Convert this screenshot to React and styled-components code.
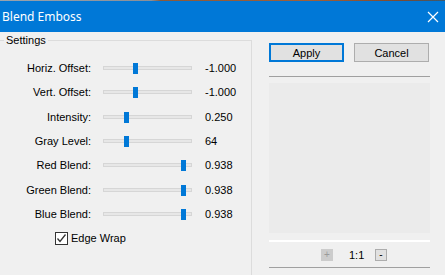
import React from 'react';
import styled, { createGlobalStyle } from 'styled-components';

const GlobalStyle = createGlobalStyle`
  html, body {
    margin: 0;
    padding: 0;
    width: 445px;
    height: 275px;
    overflow: hidden;
    background: #f0f0f0;
  }
`;

const Window = styled.div`
  display: flex;
  flex-direction: column;
  width: 445px;
  height: 275px;
  background: #f0f0f0;
  font-family: 'Liberation Sans', Arial, sans-serif;
  font-size: 11px;
  color: #000;
`;

const Desktop = styled.div`
  height: 1px;
  background: linear-gradient(90deg, #9aa3ad 0%, #8c8f96 34%, #8a5a3c 36%, #a0603a 70%, #7c4a30 90%, #3a5a70 100%);
`;

const TitleBar = styled.div`
  height: 31px;
  display: flex;
  align-items: center;
  justify-content: space-between;
  background: #0078d7;
  color: #fff;
  padding: 0 6px 0 2px;
  font-family: 'Noto Sans', 'Open Sans', sans-serif;
  font-size: 12px;
`;

const Body = styled.div`
  flex: 1;
  display: flex;
  min-height: 0;
`;

const GroupBox = styled.fieldset`
  box-sizing: border-box;
  width: 253px;
  margin: 2px 0 -10px -1px;
  padding: 3px 0 0 0;
  border: 1px solid #dcdcdc;
  legend {
    margin-left: 4px;
    padding: 0 2px;
    font-size: 11px;
  }
`;

const Rows = styled.div`
  display: grid;
  grid-template-columns: 91px 89px auto;
  grid-auto-rows: 24.33px;
  column-gap: 12px;
  align-items: center;
  margin-top: 7px;
`;

const Label = styled.div`
  text-align: right;
`;

const Track = styled.div`
  position: relative;
  height: 4px;
  background: #e7e7e7;
  border: 1px solid #d6d6d6;
  box-sizing: border-box;
`;

const Thumb = styled.div`
  position: absolute;
  top: -4px;
  width: 5px;
  height: 11px;
  background: #0078d7;
`;

const Value = styled.div`
  padding-left: 1px;
`;

const CheckRow = styled.label`
  grid-column: 1 / 4;
  display: flex;
  align-items: center;
  gap: 3px;
  padding-left: 55px;
`;

const Box = styled.span`
  box-sizing: border-box;
  width: 13px;
  height: 13px;
  border: 1px solid #333;
  background: #fff;
  display: flex;
  align-items: center;
  justify-content: center;
`;

const Side = styled.div`
  flex: 1;
  display: flex;
  flex-direction: column;
  padding: 11px 15px 0 17px;
`;

const Buttons = styled.div`
  display: flex;
  gap: 10px;
`;

const Button = styled.button`
  box-sizing: border-box;
  width: 75px;
  height: 19px;
  padding: 0;
  background: #e1e1e1;
  border: ${p => (p.$default ? '2px solid #0078d7' : '1px solid #adadad')};
  font-family: 'Liberation Sans', Arial, sans-serif;
  font-size: 11px;
  color: #000;
`;

const Rule = styled.div`
  height: 1px;
  margin-top: ${p => p.$top}px;
  background: ${p => p.$color};
`;

const Preview = styled.div`
  height: 150px;
  margin-top: 6px;
  background: #ebebeb;
`;

const WhiteRule = styled.div`
  height: 2px;
  margin-top: 7px;
  background: #fff;
`;

const ZoomBar = styled.div`
  display: flex;
  align-items: center;
  height: 12px;
  margin-top: 7px;
  padding-left: 52px;
`;

const ZoomButton = styled.span`
  box-sizing: border-box;
  width: 12px;
  height: 12px;
  display: flex;
  align-items: center;
  justify-content: center;
  font-size: 10px;
  line-height: 1;
  background: ${p => (p.$disabled ? '#cccccc' : '#e1e1e1')};
  border: 1px solid ${p => (p.$disabled ? '#cccccc' : '#adadad')};
  color: ${p => (p.$disabled ? '#9a9a9a' : '#000')};
`;

const ZoomLabel = styled.span`
  width: 14px;
  margin: 0 12px 0 16px;
`;

const sliders = [
  { label: 'Horiz. Offset:', value: '-1.000', pos: 0.37 },
  { label: 'Vert. Offset:', value: '-1.000', pos: 0.37 },
  { label: 'Intensity:', value: '0.250', pos: 0.26 },
  { label: 'Gray Level:', value: '64', pos: 0.26 },
  { label: 'Red Blend:', value: '0.938', pos: 0.94 },
  { label: 'Green Blend:', value: '0.938', pos: 0.94 },
  { label: 'Blue Blend:', value: '0.938', pos: 0.94 },
];

const App = () => (
  <Window>
    <GlobalStyle />
    <Desktop />
    <TitleBar>
      <span>Blend Emboss</span>
      <svg width="12" height="12" viewBox="0 0 12 12">
        <path d="M1 1 L11 11 M11 1 L1 11" stroke="#fff" strokeWidth="1.2" />
      </svg>
    </TitleBar>
    <Body>
      <GroupBox>
        <legend>Settings</legend>
        <Rows>
          {sliders.map(s => (
            <React.Fragment key={s.label}>
              <Label>{s.label}</Label>
              <Track>
                <Thumb style={{ left: `${Math.round(s.pos * 84) - 2}px` }} />
              </Track>
              <Value>{s.value}</Value>
            </React.Fragment>
          ))}
          <CheckRow>
            <Box>
              <svg width="11" height="11" viewBox="0 0 11 11">
                <path d="M1.5 5.5 L4 8.5 L9.5 1.5" stroke="#333" strokeWidth="1.3" fill="none" />
              </svg>
            </Box>
            Edge Wrap
          </CheckRow>
        </Rows>
      </GroupBox>
      <Side>
        <Buttons>
          <Button $default>Apply</Button>
          <Button>Cancel</Button>
        </Buttons>
        <Rule $top={14} $color="#a0a0a0" />
        <Preview />
        <WhiteRule />
        <ZoomBar>
          <ZoomButton $disabled>+</ZoomButton>
          <ZoomLabel>1:1</ZoomLabel>
          <ZoomButton>-</ZoomButton>
        </ZoomBar>
        <Rule $top={6} $color="#a0a0a0" />
      </Side>
    </Body>
  </Window>
);

export default App;
